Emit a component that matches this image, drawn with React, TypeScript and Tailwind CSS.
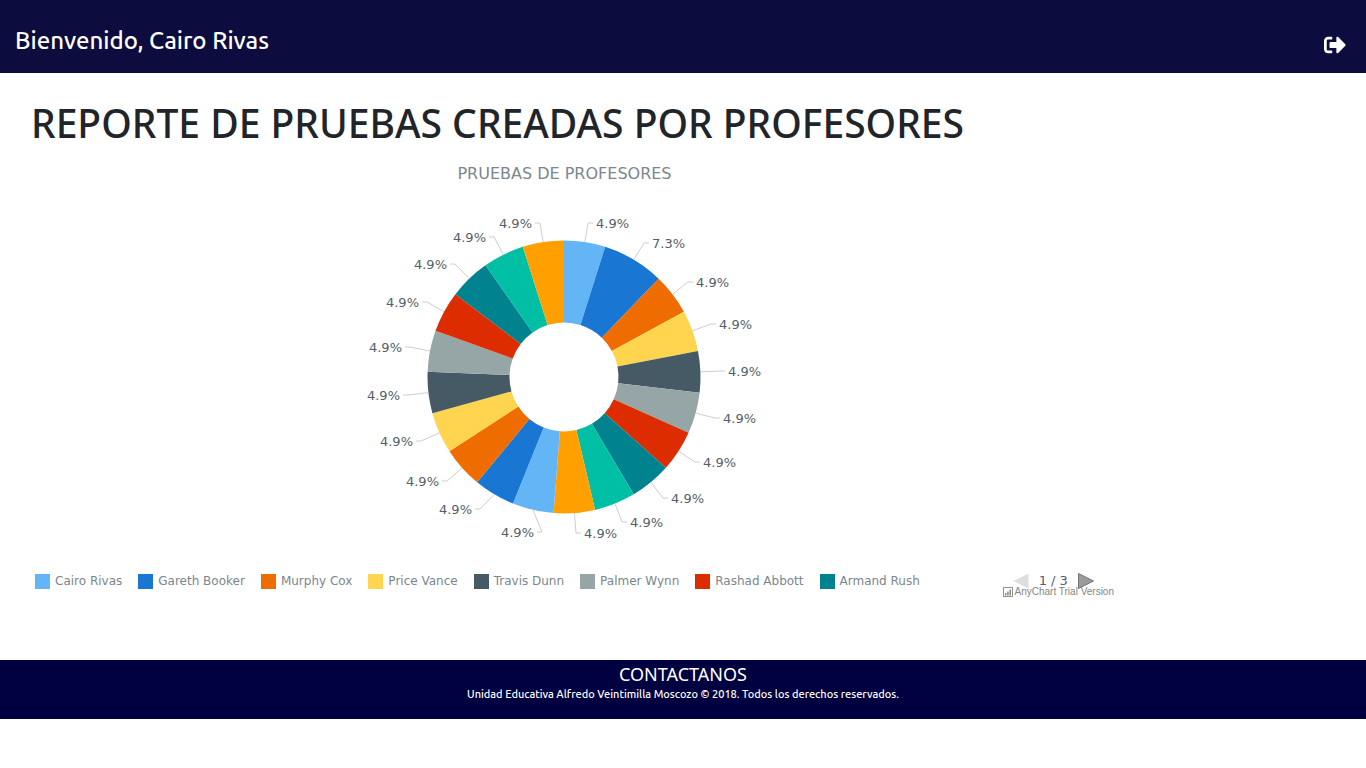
import { FaSignOutAlt } from "react-icons/fa";

const PALETTE = [
  "#64b5f6",
  "#1976d2",
  "#ef6c00",
  "#ffd54f",
  "#455a64",
  "#96a6a6",
  "#dd2c00",
  "#00838f",
  "#00bfa5",
  "#ffa000",
];

// Number of tests per teacher and the elbow of each label connector,
// relative to the centre of the ring.
const SLICES = [
  { tests: 2, x: 24, y: -154 },
  { tests: 3, x: 80, y: -134 },
  { tests: 2, x: 124, y: -95 },
  { tests: 2, x: 147, y: -53 },
  { tests: 2, x: 156, y: -6 },
  { tests: 2, x: 151, y: 41 },
  { tests: 2, x: 131, y: 85 },
  { tests: 2, x: 99, y: 121 },
  { tests: 2, x: 58, y: 145 },
  { tests: 2, x: 12, y: 156 },
  { tests: 2, x: -22, y: 155 },
  { tests: 2, x: -84, y: 132 },
  { tests: 2, x: -117, y: 104 },
  { tests: 2, x: -143, y: 64 },
  { tests: 2, x: -156, y: 18 },
  { tests: 2, x: -154, y: -30 },
  { tests: 2, x: -137, y: -75 },
  { tests: 2, x: -109, y: -113 },
  { tests: 2, x: -70, y: -140 },
  { tests: 2, x: -24, y: -154 },
];

const TEACHERS = [
  "Cairo Rivas",
  "Gareth Booker",
  "Murphy Cox",
  "Price Vance",
  "Travis Dunn",
  "Palmer Wynn",
  "Rashad Abbott",
  "Armand Rush",
];

const OUTER = 136.5;
const INNER = 54.5;

function point(radius: number, angle: number) {
  return `${(radius * Math.sin(angle)).toFixed(2)} ${(-radius * Math.cos(angle)).toFixed(2)}`;
}

function Donut() {
  const total = SLICES.reduce((sum, s) => sum + s.tests, 0);
  let done = 0;
  return (
    <svg
      viewBox="-210 -180 420 360"
      className="h-[360px] w-[420px]"
      role="img"
      aria-label="Pruebas de profesores"
    >
      {SLICES.map((s, i) => {
        const a = (done / total) * 2 * Math.PI;
        done += s.tests;
        const b = (done / total) * 2 * Math.PI;
        const side = i > 9 ? -1 : 1;
        return (
          <g key={i}>
            <path
              fill={PALETTE[i % PALETTE.length]}
              d={`M${point(INNER, a)}L${point(OUTER, a)}A${OUTER} ${OUTER} 0 0 1 ${point(OUTER, b)}L${point(INNER, b)}A${INNER} ${INNER} 0 0 0 ${point(INNER, a)}Z`}
            />
            <path
              fill="none"
              stroke="#cecece"
              d={`M${point(OUTER, (a + b) / 2)}L${s.x} ${s.y}h${5 * side}`}
            />
            <text
              x={s.x + 8 * side}
              y={s.y + 5}
              textAnchor={side > 0 ? "start" : "end"}
              className="fill-[#545f69] text-[13px]"
            >
              {((s.tests / total) * 100).toFixed(1)}%
            </text>
          </g>
        );
      })}
    </svg>
  );
}

export default function App() {
  return (
    <div className="bg-white font-['Ubuntu','Noto_Sans',sans-serif] text-[#212529]">
      <header className="flex items-center justify-between bg-[#0c0c3e] pt-[17px] pr-5 pl-[15px] text-white">
        <p className="pt-1 pb-3 text-[24px] leading-10 font-medium">Bienvenido, Cairo Rivas</p>
        <a href="#salir" aria-label="Salir">
          <FaSignOutAlt size={22} />
        </a>
      </header>

      <main className="px-[15px] pt-6 pb-[62px]">
        <h1 className="px-4 font-['Noto_Sans',sans-serif] text-[39px] leading-[52px] font-medium">
          REPORTE DE PRUEBAS CREADAS POR PROFESORES
        </h1>

        <section className="flex max-w-[1099px] flex-col items-center pt-[13px] font-['DejaVu_Sans',sans-serif] text-[#7c868e]">
          <h2 className="text-[16px] leading-6">PRUEBAS DE PROFESORES</h2>
          <div className="pt-[11px] pr-[2px]">
            <Donut />
          </div>
          <div className="flex w-full items-start justify-between pt-3 pl-5">
            <ul className="flex gap-4 text-[12px] leading-6">
              {TEACHERS.map((name, i) => (
                <li key={name} className="flex items-center gap-[5px] whitespace-nowrap">
                  <svg className="size-[15px]" viewBox="0 0 15 15" aria-hidden="true">
                    <rect width="15" height="15" fill={PALETTE[i]} />
                  </svg>
                  {name}
                </li>
              ))}
            </ul>
            <div className="flex flex-col items-center">
              <div className="flex h-[17px] items-center gap-[10px] pt-[6px] pr-[10px] text-[13px] text-[#545f69]">
                <button type="button" aria-label="Anterior" disabled>
                  <svg className="h-4 w-4" viewBox="0 0 16 16">
                    <path d="M15.500 .5v15L.5 8z" fill="#dedede" />
                  </svg>
                </button>
                <span>1 / 3</span>
                <button type="button" aria-label="Siguiente">
                  <svg className="h-4 w-4" viewBox="0 0 16 16">
                    <path d="M.5 .5v15L15.500 8z" fill="#9b9b9b" stroke="#757575" />
                  </svg>
                </button>
              </div>
              <a
                href="#anychart"
                className="flex items-center gap-[2px] font-['Liberation_Sans',sans-serif] text-[10px] leading-3 whitespace-nowrap text-[#868686]"
              >
                <svg className="size-[10px]" viewBox="0 0 10 10" aria-hidden="true">
                  <rect x=".5" y=".5" width="9" height="9" fill="none" stroke="#929292" />
                  <path d="M2 6h1.500v2.500H2zM4.200 4.500h1.500v4H4.200zM6.500 2.500H8v6H6.500z" fill="#868686" />
                </svg>
                AnyChart Trial Version
              </a>
            </div>
          </div>
        </section>
      </main>

      <footer className="bg-[#000040] pt-1 pb-[14px] text-center text-white">
        <p className="font-['Noto_Sans',sans-serif] text-[18px] leading-5">CONTACTANOS</p>
        <p className="text-[11px] leading-[21px] font-medium">
          Unidad Educativa Alfredo Veintimilla Moscozo © 2018. Todos los derechos reservados.
        </p>
      </footer>
    </div>
  );
}
